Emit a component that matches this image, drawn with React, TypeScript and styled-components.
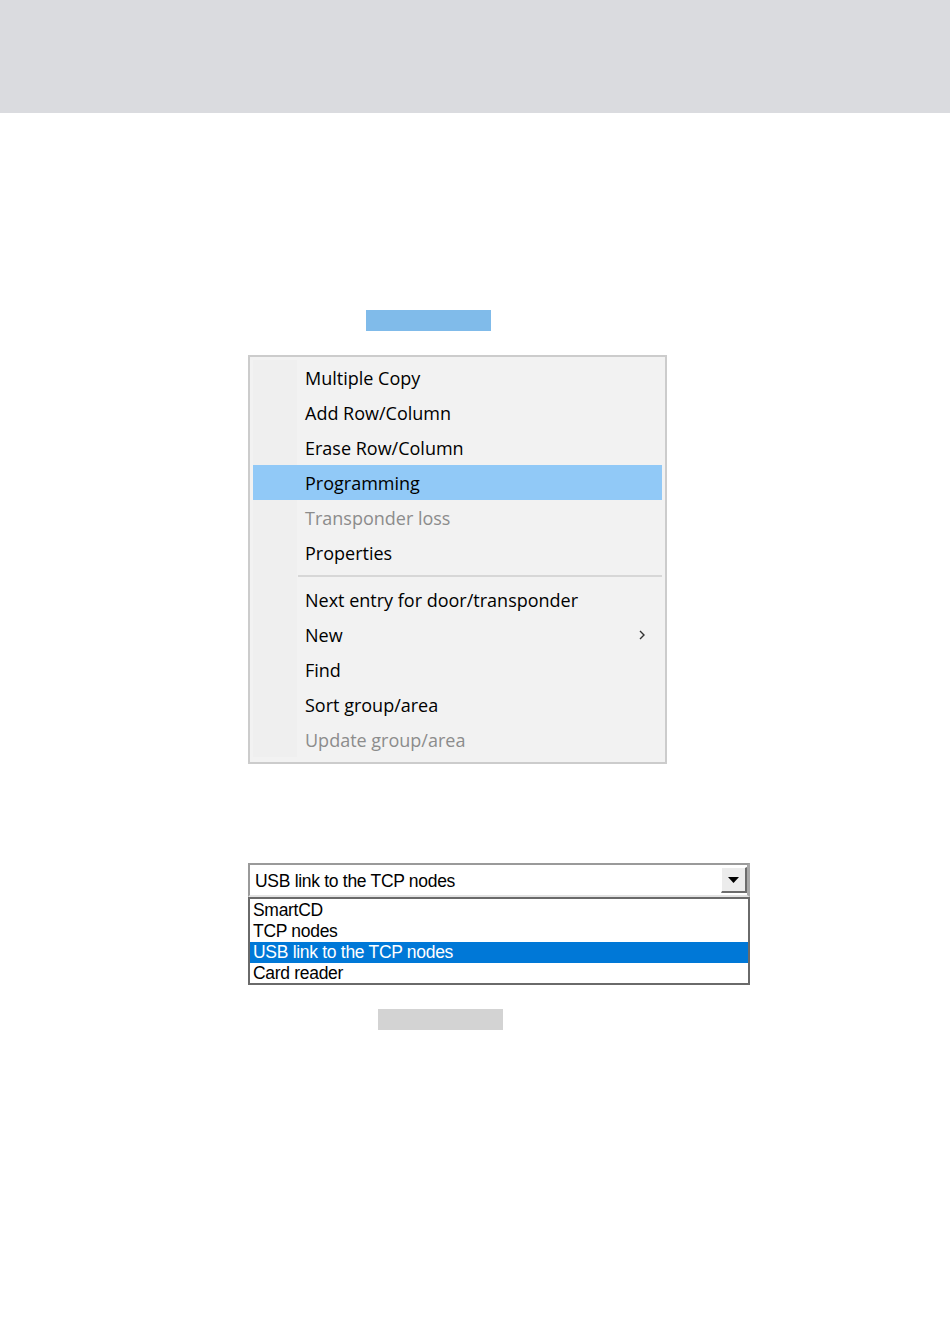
import React from "react";
import styled, { createGlobalStyle } from "styled-components";

const GlobalStyle = createGlobalStyle`
  html, body {
    margin: 0;
    padding: 0;
    background: #ffffff;
  }
`;

const Page = styled.div`
  width: 950px;
  min-height: 1344px;
  display: flex;
  flex-direction: column;
`;

const Header = styled.header`
  height: 113px;
  background: #dadbdf;
`;

const Content = styled.main`
  display: flex;
  flex-direction: column;
  align-items: flex-start;
  padding: 197px 0 0 248px;
`;

const Bar = styled.div<{ $color: string; $offset: number; $gap?: number }>`
  width: 125px;
  height: 21px;
  margin-left: ${(p) => p.$offset}px;
  margin-top: ${(p) => p.$gap ?? 0}px;
  background: ${(p) => p.$color};
`;

const Menu = styled.div`
  margin-top: 24px;
  width: 415px;
  box-sizing: content-box;
  border: 2px solid #cccccc;
  background: #f2f2f2;
  padding: 3px 0 5px;
  font-family: "Open Sans", "Noto Sans", sans-serif;
  font-size: 18px;
`;

const MenuItem = styled.div<{ $active?: boolean; $disabled?: boolean }>`
  height: 35px;
  margin: 0 3px;
  display: flex;
  align-items: center;
  padding: 0 16px 0 52px;
  color: ${(p) => (p.$disabled ? "#8c8c8c" : "#000000")};
  background: ${(p) =>
    p.$active
      ? "#91c9f7"
      : "linear-gradient(to right, #efefef 0 44px, #f2f2f2 44px)"};
`;

const Label = styled.span`
  flex: 1;
  padding-top: 1px;
`;

const Separator = styled.div`
  height: 12px;
  margin: 0 3px;
  display: flex;
  align-items: center;
  background: linear-gradient(to right, #efefef 0 44px, #f2f2f2 44px);

  &::after {
    content: "";
    flex: 1;
    margin-left: 45px;
    height: 2px;
    background: #d7d7d7;
  }
`;

const Chevron = styled.svg`
  width: 8px;
  height: 12px;
`;

const Combo = styled.div`
  margin-top: 99px;
  width: 502px;
  font-family: "Liberation Sans", Arial, sans-serif;
  font-size: 17.5px;
  letter-spacing: -0.3px;
`;

const ComboField = styled.div`
  height: 34px;
  box-sizing: border-box;
  border: 2px solid #9a9a9a;
  border-bottom: 2px solid #e3e3e3;
  border-right: 3px solid #a8a8a8;
  background: #ffffff;
  display: flex;
  align-items: center;
  padding: 0 0 0 5px;
`;

const ComboText = styled.span`
  flex: 1;
  padding-top: 3px;
`;

const DropButton = styled.div`
  width: 26px;
  height: 26px;
  box-sizing: border-box;
  background: #ececec;
  border-top: 1px solid #ffffff;
  border-left: 1px solid #ffffff;
  border-right: 2px solid #6c6c6c;
  border-bottom: 2px solid #6c6c6c;
  display: flex;
  align-items: center;
  justify-content: center;
`;

const ListBox = styled.div`
  box-sizing: border-box;
  border: 2px solid #6a6a6a;
  background: #ffffff;
  height: 88px;
  padding-top: 1px;
`;

const ListRow = styled.div<{ $selected?: boolean }>`
  height: 21px;
  line-height: 21px;
  padding-left: 3px;
  background: ${(p) => (p.$selected ? "#0078d7" : "transparent")};
  color: ${(p) => (p.$selected ? "#ffffff" : "#000000")};
`;

const menuTop = [
  { label: "Multiple Copy" },
  { label: "Add Row/Column" },
  { label: "Erase Row/Column" },
  { label: "Programming", active: true },
  { label: "Transponder loss", disabled: true },
  { label: "Properties" },
];

const menuBottom = [
  { label: "Next entry for door/transponder" },
  { label: "New", sub: true },
  { label: "Find" },
  { label: "Sort group/area" },
  { label: "Update group/area", disabled: true },
];

const options = ["SmartCD", "TCP nodes", "USB link to the TCP nodes", "Card reader"];

type Item = { label: string; active?: boolean; disabled?: boolean; sub?: boolean };

const renderItem = (it: Item) => (
  <MenuItem key={it.label} $active={it.active} $disabled={it.disabled}>
    <Label>{it.label}</Label>
    {it.sub && (
      <Chevron viewBox="0 0 8 12">
        <path d="M2 2 L6 6 L2 10" fill="none" stroke="#333" strokeWidth="1.4" />
      </Chevron>
    )}
  </MenuItem>
);

const App: React.FC = () => (
  <Page>
    <GlobalStyle />
    <Header />
    <Content>
      <Bar $color="#80bbea" $offset={118} />
      <Menu>
        {menuTop.map(renderItem)}
        <Separator />
        {menuBottom.map(renderItem)}
      </Menu>
      <Combo>
        <ComboField>
          <ComboText>USB link to the TCP nodes</ComboText>
          <DropButton>
            <svg width="11" height="6" viewBox="0 0 11 6">
              <path d="M0 0 H11 L5.5 6 Z" fill="#000" />
            </svg>
          </DropButton>
        </ComboField>
        <ListBox>
          {options.map((o) => (
            <ListRow key={o} $selected={o === "USB link to the TCP nodes"}>
              {o}
            </ListRow>
          ))}
        </ListBox>
      </Combo>
      <Bar $color="#d3d3d3" $offset={130} $gap={24} />
    </Content>
  </Page>
);

export default App;
